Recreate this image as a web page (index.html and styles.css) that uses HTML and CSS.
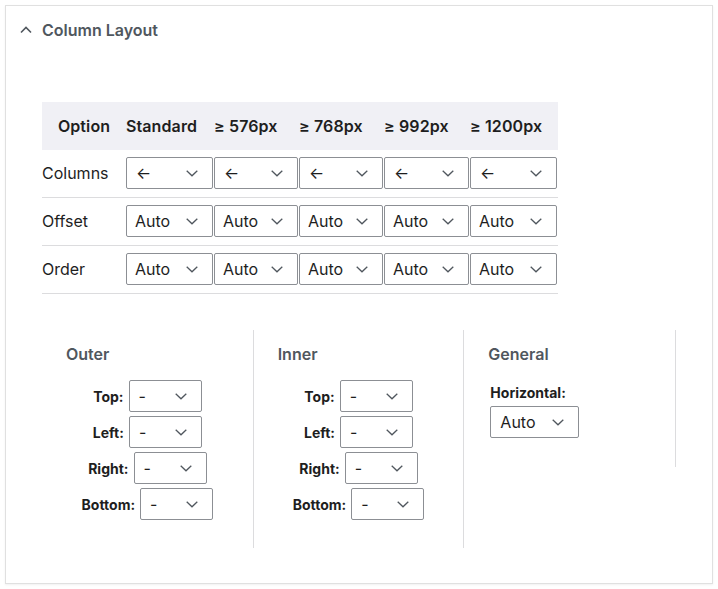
FILE: index.html
```html
<!DOCTYPE html>
<html>
<head>
<meta charset="utf-8">
<link rel="stylesheet" href="styles.css">
</head>
<body>
<div class="panel">
  <div class="panel-head">
    <svg class="chev-up" width="12" height="8" viewBox="0 0 12 8"><polyline points="1,6.5 6,1.5 11,6.5" fill="none" stroke="#50575e" stroke-width="1.6"/></svg>
    <span class="panel-title">Column Layout</span>
  </div>
  <div class="panel-body">
    <div class="grid">
      <div class="hrow">
        <div class="th th-first">Option</div>
        <div class="th">Standard</div>
        <div class="th">≥ 576px</div>
        <div class="th">≥ 768px</div>
        <div class="th">≥ 992px</div>
        <div class="th">≥ 1200px</div>
      </div>
      <div class="row">
        <div class="td-label">Columns</div>
        <div class="sel"><span class="val arrow">←</span><svg class="chev" width="12" height="7" viewBox="0 0 12 7"><polyline points="0.7,0.8 6,5.8 11.3,0.8" fill="none" stroke="#50575e" stroke-width="1.3"/></svg></div>
        <div class="sel"><span class="val arrow">←</span><svg class="chev" width="12" height="7" viewBox="0 0 12 7"><polyline points="0.7,0.8 6,5.8 11.3,0.8" fill="none" stroke="#50575e" stroke-width="1.3"/></svg></div>
        <div class="sel"><span class="val arrow">←</span><svg class="chev" width="12" height="7" viewBox="0 0 12 7"><polyline points="0.7,0.8 6,5.8 11.3,0.8" fill="none" stroke="#50575e" stroke-width="1.3"/></svg></div>
        <div class="sel"><span class="val arrow">←</span><svg class="chev" width="12" height="7" viewBox="0 0 12 7"><polyline points="0.7,0.8 6,5.8 11.3,0.8" fill="none" stroke="#50575e" stroke-width="1.3"/></svg></div>
        <div class="sel"><span class="val arrow">←</span><svg class="chev" width="12" height="7" viewBox="0 0 12 7"><polyline points="0.7,0.8 6,5.8 11.3,0.8" fill="none" stroke="#50575e" stroke-width="1.3"/></svg></div>
      </div>
      <div class="row">
        <div class="td-label">Offset</div>
        <div class="sel"><span class="val">Auto</span><svg class="chev" width="12" height="7" viewBox="0 0 12 7"><polyline points="0.7,0.8 6,5.8 11.3,0.8" fill="none" stroke="#50575e" stroke-width="1.3"/></svg></div>
        <div class="sel"><span class="val">Auto</span><svg class="chev" width="12" height="7" viewBox="0 0 12 7"><polyline points="0.7,0.8 6,5.8 11.3,0.8" fill="none" stroke="#50575e" stroke-width="1.3"/></svg></div>
        <div class="sel"><span class="val">Auto</span><svg class="chev" width="12" height="7" viewBox="0 0 12 7"><polyline points="0.7,0.8 6,5.8 11.3,0.8" fill="none" stroke="#50575e" stroke-width="1.3"/></svg></div>
        <div class="sel"><span class="val">Auto</span><svg class="chev" width="12" height="7" viewBox="0 0 12 7"><polyline points="0.7,0.8 6,5.8 11.3,0.8" fill="none" stroke="#50575e" stroke-width="1.3"/></svg></div>
        <div class="sel"><span class="val">Auto</span><svg class="chev" width="12" height="7" viewBox="0 0 12 7"><polyline points="0.7,0.8 6,5.8 11.3,0.8" fill="none" stroke="#50575e" stroke-width="1.3"/></svg></div>
      </div>
      <div class="row">
        <div class="td-label">Order</div>
        <div class="sel"><span class="val">Auto</span><svg class="chev" width="12" height="7" viewBox="0 0 12 7"><polyline points="0.7,0.8 6,5.8 11.3,0.8" fill="none" stroke="#50575e" stroke-width="1.3"/></svg></div>
        <div class="sel"><span class="val">Auto</span><svg class="chev" width="12" height="7" viewBox="0 0 12 7"><polyline points="0.7,0.8 6,5.8 11.3,0.8" fill="none" stroke="#50575e" stroke-width="1.3"/></svg></div>
        <div class="sel"><span class="val">Auto</span><svg class="chev" width="12" height="7" viewBox="0 0 12 7"><polyline points="0.7,0.8 6,5.8 11.3,0.8" fill="none" stroke="#50575e" stroke-width="1.3"/></svg></div>
        <div class="sel"><span class="val">Auto</span><svg class="chev" width="12" height="7" viewBox="0 0 12 7"><polyline points="0.7,0.8 6,5.8 11.3,0.8" fill="none" stroke="#50575e" stroke-width="1.3"/></svg></div>
        <div class="sel"><span class="val">Auto</span><svg class="chev" width="12" height="7" viewBox="0 0 12 7"><polyline points="0.7,0.8 6,5.8 11.3,0.8" fill="none" stroke="#50575e" stroke-width="1.3"/></svg></div>
      </div>
    </div>

    <div class="groups">
      <div class="group">
        <div class="group-title">Outer</div>
        <div class="fields">
          <div class="field"><span class="flabel">Top:</span><div class="sel sel-sm"><span class="val">-</span><svg class="chev" width="12" height="7" viewBox="0 0 12 7"><polyline points="0.7,0.8 6,5.8 11.3,0.8" fill="none" stroke="#50575e" stroke-width="1.3"/></svg></div></div>
          <div class="field"><span class="flabel">Left:</span><div class="sel sel-sm"><span class="val">-</span><svg class="chev" width="12" height="7" viewBox="0 0 12 7"><polyline points="0.7,0.8 6,5.8 11.3,0.8" fill="none" stroke="#50575e" stroke-width="1.3"/></svg></div></div>
          <div class="field"><span class="flabel">Right:</span><div class="sel sel-sm"><span class="val">-</span><svg class="chev" width="12" height="7" viewBox="0 0 12 7"><polyline points="0.7,0.8 6,5.8 11.3,0.8" fill="none" stroke="#50575e" stroke-width="1.3"/></svg></div></div>
          <div class="field"><span class="flabel">Bottom:</span><div class="sel sel-sm"><span class="val">-</span><svg class="chev" width="12" height="7" viewBox="0 0 12 7"><polyline points="0.7,0.8 6,5.8 11.3,0.8" fill="none" stroke="#50575e" stroke-width="1.3"/></svg></div></div>
        </div>
      </div>
      <div class="group">
        <div class="group-title">Inner</div>
        <div class="fields">
          <div class="field"><span class="flabel">Top:</span><div class="sel sel-sm"><span class="val">-</span><svg class="chev" width="12" height="7" viewBox="0 0 12 7"><polyline points="0.7,0.8 6,5.8 11.3,0.8" fill="none" stroke="#50575e" stroke-width="1.3"/></svg></div></div>
          <div class="field"><span class="flabel">Left:</span><div class="sel sel-sm"><span class="val">-</span><svg class="chev" width="12" height="7" viewBox="0 0 12 7"><polyline points="0.7,0.8 6,5.8 11.3,0.8" fill="none" stroke="#50575e" stroke-width="1.3"/></svg></div></div>
          <div class="field"><span class="flabel">Right:</span><div class="sel sel-sm"><span class="val">-</span><svg class="chev" width="12" height="7" viewBox="0 0 12 7"><polyline points="0.7,0.8 6,5.8 11.3,0.8" fill="none" stroke="#50575e" stroke-width="1.3"/></svg></div></div>
          <div class="field"><span class="flabel">Bottom:</span><div class="sel sel-sm"><span class="val">-</span><svg class="chev" width="12" height="7" viewBox="0 0 12 7"><polyline points="0.7,0.8 6,5.8 11.3,0.8" fill="none" stroke="#50575e" stroke-width="1.3"/></svg></div></div>
        </div>
      </div>
      <div class="group group-general">
        <div class="group-title">General</div>
        <div class="hlabel">Horizontal:</div>
        <div class="sel sel-h"><span class="val">Auto</span><svg class="chev" width="12" height="7" viewBox="0 0 12 7"><polyline points="0.7,0.8 6,5.8 11.3,0.8" fill="none" stroke="#50575e" stroke-width="1.3"/></svg></div>
      </div>
    </div>
  </div>
</div>
</body>
</html>
```

FILE: styles.css
```css
* { box-sizing: border-box; }
html, body { margin: 0; background: #ffffff; }
body {
  padding: 5px;
  font-family: Inter, "Noto Sans", sans-serif;
  color: #1e1e1e;
}
.panel {
  width: 708px;
  height: 579px;
  border: 1px solid #e0e0e0;
  box-shadow: 0 1px 2px rgba(0,0,0,0.06);
  background: #fff;
}
.panel-head {
  height: 48px;
  display: flex;
  align-items: center;
  padding-left: 14px;
  gap: 10px;
}
.chev-up { display: block; }
.panel-title {
  font-size: 16px;
  font-weight: 600;
  color: #50575e;
}
.panel-body {
  padding: 48px 36px 0 36px;
}
.grid { width: 516px; }
.hrow, .row {
  display: grid;
  grid-template-columns: 84px 88px 85px 85px 86px 88px;
  height: 48px;
  align-items: center;
}
.hrow {
  background: #f0f0f5;
  font-size: 16px;
  font-weight: 600;
  color: #1e1e1e;
}
.th { white-space: nowrap; letter-spacing: 0.1px; }
.th-first { text-align: center; }
.row {
  border-bottom: 1px solid #dcdcde;
  padding-top: 7px;
  padding-bottom: 8px;
  align-items: stretch;
}
.td-label {
  font-size: 16px;
  display: flex;
  align-items: center;
  color: #1e1e1e;
}
.sel {
  height: 32px;
  border: 1px solid #8c8f94;
  border-radius: 2px;
  display: flex;
  align-items: center;
  justify-content: space-between;
  padding: 0 14px 0 8px;
  font-size: 16px;
  color: #1e1e1e;
  background: #fff;
}
.row .sel { margin-right: 1px; }
.val { line-height: 1; }
.arrow { font-size: 16px; padding-left: 1px; color: #1e1e1e; }
.chev { display: block; flex: none; }
.groups {
  margin-top: 36px;
  display: flex;
  align-items: flex-start;
}
.group {
  width: 212px;
  border-right: 1px solid #dcdcde;
  padding: 12px 24px 28px 24px;
}
.group + .group { width: 211px; }
.group-general { width: 212px !important; padding-bottom: 29px; }
.group-title {
  font-size: 16px;
  font-weight: 600;
  color: #50575e;
  line-height: 24px;
  margin-bottom: 14px;
}
.fields {
  display: flex;
  flex-direction: column;
  align-items: center;
  gap: 4px;
}
.field {
  display: flex;
  align-items: center;
  gap: 5px;
}
.flabel {
  font-size: 14px;
  font-weight: 700;
  color: #1e1e1e;
}
.sel-sm { width: 73px; padding-left: 9px; }
.hlabel {
  font-size: 14px;
  font-weight: 700;
  margin-left: 2px;
  margin-top: 19px;
  line-height: 16px;
  margin-bottom: 5px;
}
.sel-h { width: 89px; margin-left: 2px; padding-left: 9px; }
```
